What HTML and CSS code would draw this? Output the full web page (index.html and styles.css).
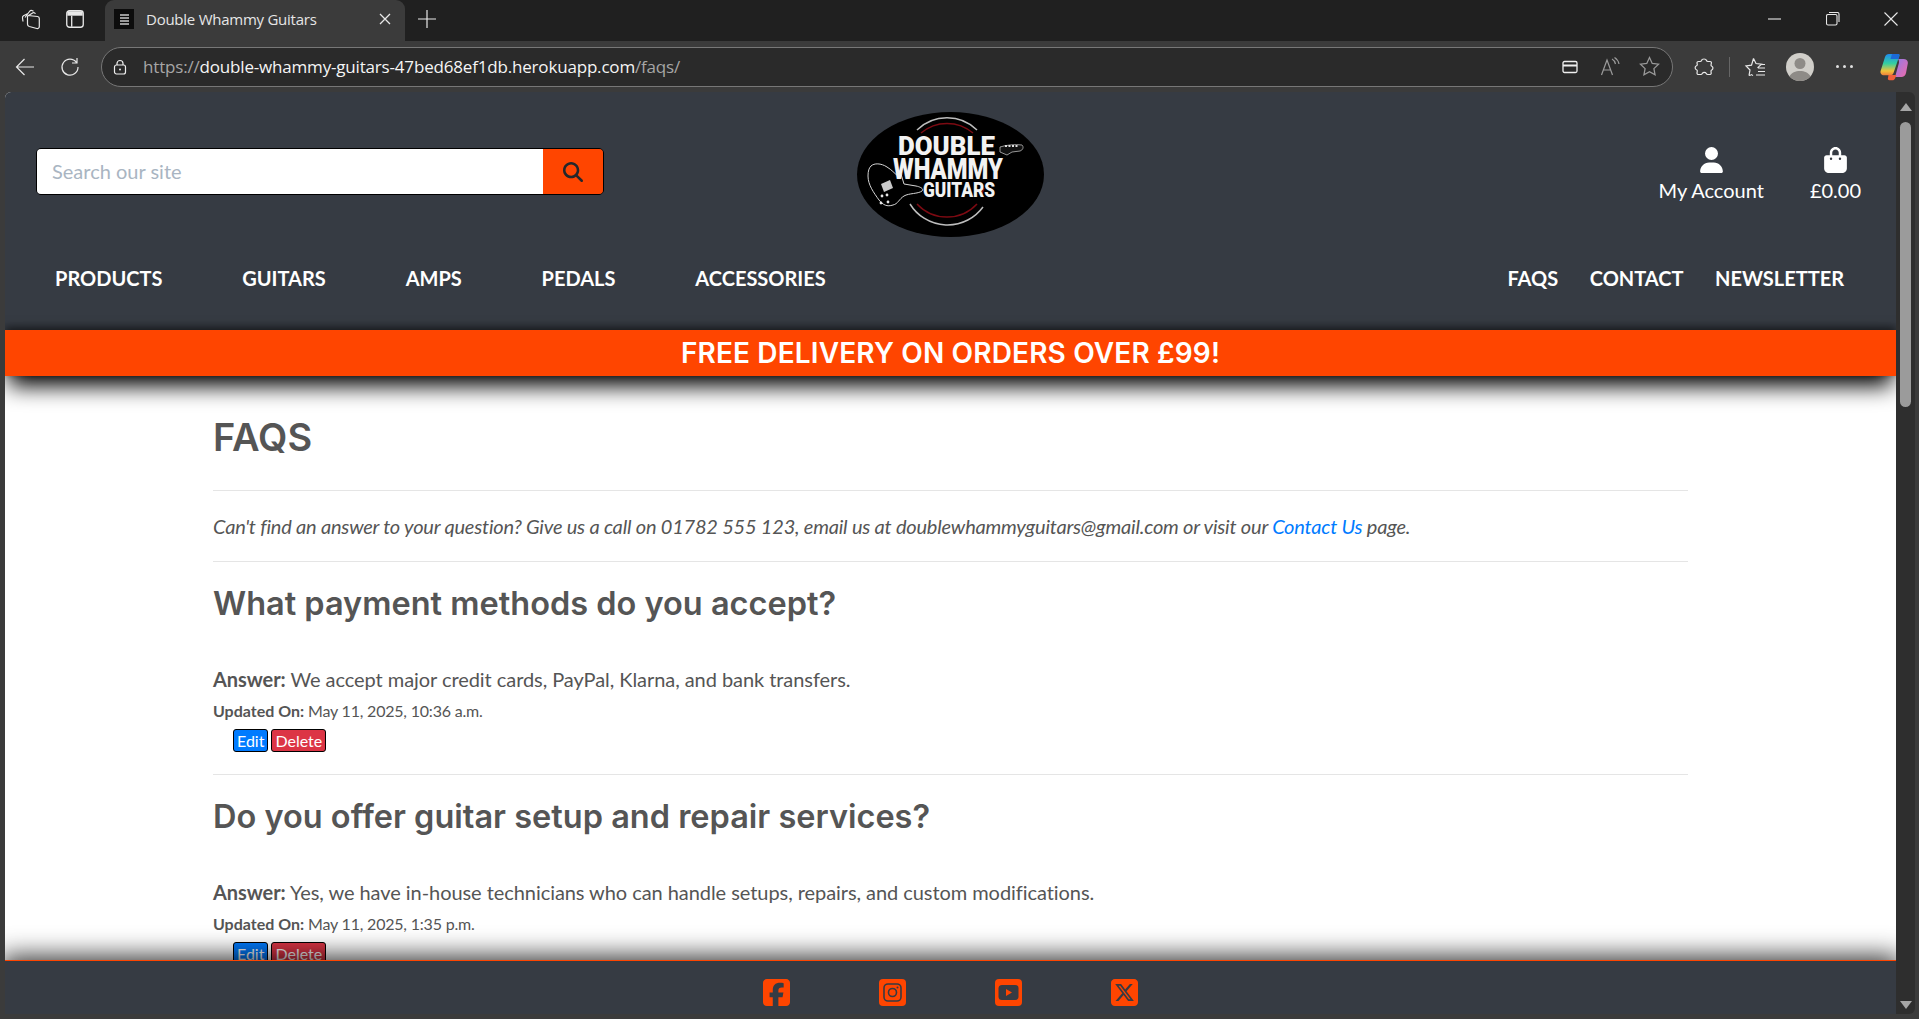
FILE: index.html
```html
<!DOCTYPE html>
<html lang="en">
<head>
<meta charset="utf-8">
<title>Double Whammy Guitars</title>
<link rel="stylesheet" href="styles.css">
</head>
<body>
<div class="window">
  <div class="tabstrip">
    <svg class="ti ti-work" viewBox="0 0 21 21"><path d="M8.500 6.500 13 3.800c1-.5 2 .2 2.500 1M5 8.500l4.500-6c.7-.9 2-1.200 3-.7l1 .5M3 12.500 2.500 9c-.2-1 .2-1.800 1-2.300L8 4.500"/><path d="M8 6.500l9.500 1c1 .1 1.800 1 1.800 2v8c0 1.300-1.200 2.300-2.500 2l-7.500-2c-1-.3-1.800-1.200-1.800-2.300V7.800c0-.8.300-1.300.5-1.300Z"/></svg>
    <svg class="ti ti-side" viewBox="0 0 20 20"><rect x="2.500" y="2.500" width="15" height="15" rx="2.500"/><path class="fillw" d="M3 3h14v4H3z"/><path d="M7 7v10"/></svg>
    <div class="tab">
      <span class="favicon"><i></i><i></i><i></i><i></i></span>
      <span class="tab-title">Double Whammy Guitars</span>
      <svg class="tab-x" viewBox="0 0 12 12"><path d="M1 1l10 10M11 1 1 11"/></svg>
    </div>
    <svg class="ti ti-plus" viewBox="0 0 18 18"><path d="M9 0v18M0 9h18"/></svg>
    <div class="winctl">
      <svg class="wc" viewBox="0 0 14 14"><path d="M0 7h13"/></svg>
      <svg class="wc" viewBox="0 0 14 14"><rect x=".5" y="2.500" width="10.500" height="10.500" rx="1.500"/><path d="M3 .5h8.500c1 0 1.500.6 1.500 1.500v8"/></svg>
      <svg class="wc" viewBox="0 0 14 14"><path d="M.5.5l13 13M13.500.5l-13 13"/></svg>
    </div>
  </div>
  <div class="toolbar">
    <svg class="ti ti-back" viewBox="0 0 20 20"><path d="M19 10H1.500M9.500 2 1.500 10l8 8"/></svg>
    <svg class="ti ti-reload" viewBox="0 0 20 20"><path d="M16.500 5.500A8 8 0 1 0 18 10M17 1v5h-5"/></svg>
    <div class="address">
      <svg class="lock" viewBox="0 0 16 16"><rect x="2.500" y="6" width="11" height="9" rx="2"/><path d="M5 6V4.500a3 3 0 0 1 6 0V6"/><circle cx="8" cy="10.500" r="1" class="fillw"/></svg>
      <span class="url"><span class="dim">https://</span>double-whammy-guitars-47bed68ef1db.herokuapp.com<span class="dim">/faqs/</span></span>
      <svg class="ai ai-card" viewBox="0 0 16 14"><rect x="1" y="1.500" width="14" height="11" rx="1.500"/><path d="M1 5.500h14" class="thick"/></svg>
      <svg class="ai ai-read" viewBox="0 0 20 20"><path d="M1.500 18 7 3l5.500 15M3.500 13h7M12 2c2 1 3 3 3.500 5M14.500 0.500c2.500 1.500 4 4 4.500 6.500"/></svg>
      <svg class="ai ai-star" viewBox="0 0 20 20"><path d="m10 1.500 2.600 5.600 6 .7-4.400 4.200 1.100 6L10 15l-5.300 3 1.100-6L1.400 7.800l6-.7Z"/></svg>
    </div>
    <svg class="ti ti-ext" viewBox="0 0 20 20"><path d="M7.500 3.500C8 1.500 12 1.500 12.500 3.500c.2.800 1 1 1.500 1h2c1 0 1.500.7 1.400 1.500l-.4 2c-.1.600.3 1 .8 1.200 1.500.8 1.500 3 0 3.800-.5.300-.9.700-.8 1.300l.2 1.700c.1 1-.6 1.500-1.500 1.500h-2c-.6 0-1.100-.4-1.400-1-.8-1.500-3.200-1.500-4 0-.3.600-.8 1-1.400 1H4.500c-1 0-1.600-.7-1.500-1.500l.3-2c.1-.6-.3-1-.8-1.200-1.800-.8-1.800-3.300 0-4 .5-.2.900-.7.800-1.200L3 6c-.1-1 .6-1.500 1.500-1.500h1.700c.6 0 1.100-.4 1.300-1Z"/></svg>
    <span class="sep"></span>
    <svg class="ti ti-fav" viewBox="0 0 22 20"><path d="M9.500 1.500 12 6.500l5.500.6-4 3.800M8 18.500l1-.5M5 18.500 6 13 2 9l5.500-.8L9.500 1.500M14 11h7M14 14.500h7M12 18h9M5 18.500c1 0 2-.5 3-1M16 7.500h5"/></svg>
    <svg class="avatar" viewBox="0 0 28 28"><circle cx="14" cy="14" r="14" class="av-bg"/><circle cx="14" cy="10.500" r="5.500" class="av-fg"/><path class="av-fg" d="M3.500 23.500C5.500 19.500 9.500 18 14 18s8.500 1.500 10.500 5.500A14 14 0 0 1 14 28a14 14 0 0 1-10.500-4.500Z"/></svg>
    <span class="dots"><i></i><i></i><i></i></span>
    <svg class="copilot" viewBox="0 0 28 28">
      <defs>
        <linearGradient id="cpa" x1="0" y1="0" x2="0" y2="1"><stop offset="0" stop-color="#1f8cf0"/><stop offset=".45" stop-color="#35cfa0"/><stop offset=".8" stop-color="#f2c33a"/><stop offset="1" stop-color="#f0803a"/></linearGradient>
        <linearGradient id="cpb" x1="0" y1="0" x2="1" y2="1"><stop offset="0" stop-color="#8f7be8"/><stop offset="1" stop-color="#f06aa8"/></linearGradient>
      </defs>
      <path fill="url(#cpa)" d="M9 1h9c1.200 0 1.800.7 1.400 1.800L13.500 20c-.6 1.500-1.500 2.200-3 2.200H4c-2.500 0-4-2-3.400-4.300L5 4c.6-2 2-3 4-3Z"/>
      <path fill="url(#cpb)" d="M18 6h5.500c3 0 4.800 2 4.300 4.500L26 20c-.5 2.600-2.500 4-4.500 4H15l3.800-13.500c.4-1.400.2-3.500-.8-4.500Z"/>
      <path fill="#f0603a" d="M8.500 22h8l-1.500 3.500c-.5 1.200-1.300 1.800-2.700 1.800H9.500c-1.300 0-2-1-1.500-2.200Z"/>
      <path fill="#1c6ad8" d="M12 1h6c1.200 0 1.800.7 1.400 1.800L18.500 6H10.500Z"/>
    </svg>
  </div>

  <div class="viewport">
    <div class="page">
      <header class="site-header">
        <div class="header-top">
          <form class="search">
            <span class="search-input">Search our site</span>
            <span class="search-btn">
              <svg viewBox="0 0 512 512"><path d="M416 208c0 45.900-14.900 88.300-40 122.700L502.600 457.400c12.500 12.500 12.500 32.800 0 45.300s-32.800 12.500-45.300 0L330.700 376c-34.400 25.200-76.800 40-122.700 40C93.100 416 0 322.900 0 208S93.100 0 208 0S416 93.100 416 208zM208 352a144 144 0 1 0 0-288 144 144 0 1 0 0 288z"/></svg>
            </span>
          </form>
          <svg class="logo" viewBox="0 0 187 125" role="img" aria-label="Double Whammy Guitars">
            <ellipse cx="93.500" cy="62.500" rx="93.500" ry="62.500" class="logo-bg"/>
            <path class="logo-arc-g" d="M60 18A43 43 0 0 1 120 18M53 92A44 44 0 0 0 126 95"/>
            <path class="logo-arc-r" d="M64 21A40 40 0 0 1 116 21M60 92A41 41 0 0 0 120 92M124 84 127 76"/>
            <path class="logo-guitar" d="M14 54c3-3 10-3 16 1 5 3 7 6 11 9l3-2 3 10 12 2c5 1 8 3 6 5-4 3-13 2-18 5-5 3-6 8-11 9-6 2-10 0-14-5-5-7-11-15-11-24 0-5 1-8 3-10Z"/>
            <path class="logo-pick" d="M24 72l9-4 3 8-9 4Z"/>
            <circle class="logo-dot" cx="25" cy="84" r="1.400"/><circle class="logo-dot" cx="30" cy="83" r="1.400"/><circle class="logo-dot" cx="24" cy="91" r="1.400"/><circle class="logo-dot" cx="31" cy="90" r="1.400"/>
            <path class="logo-head" d="M143 35c6-2 15-3 22-2 2 2 1 5-2 6l-8 1-5 3-7-3Z"/>
            <path class="logo-pegs" d="M148 34h14"/>
            <text class="logo-t logo-t1" x="41" y="43" textLength="97" lengthAdjust="spacingAndGlyphs">DOUBLE</text>
            <text class="logo-t logo-t2" x="36" y="67" textLength="110" lengthAdjust="spacingAndGlyphs">WHAMMY</text>
            <text class="logo-t logo-t3" x="66" y="85" textLength="72" lengthAdjust="spacingAndGlyphs">GUITARS</text>
          </svg>
          <div class="header-links">
            <a class="hl hl-account">
              <svg viewBox="0 0 448 512"><path d="M224 256A128 128 0 1 0 224 0a128 128 0 1 0 0 256zm-45.700 48C79.800 304 0 383.800 0 482.300C0 498.700 13.300 512 29.700 512H418.300c16.400 0 29.700-13.300 29.700-29.700C448 383.800 368.200 304 269.700 304H178.300z"/></svg>
              <span>My Account</span>
            </a>
            <a class="hl hl-cart">
              <svg viewBox="0 0 448 512"><path d="M160 112c0-35.300 28.700-64 64-64s64 28.700 64 64v48H160V112zm-48 48H48c-26.500 0-48 21.500-48 48V416c0 53 43 96 96 96H352c53 0 96-43 96-96V208c0-26.500-21.500-48-48-48H336V112C336 50.100 285.900 0 224 0S112 50.100 112 112v48zm24 48a24 24 0 1 1 0 48 24 24 0 1 1 0-48zm152 24a24 24 0 1 1 48 0 24 24 0 1 1 -48 0z"/></svg>
              <span>£0.00</span>
            </a>
          </div>
        </div>
        <nav class="main-nav">
          <div class="nav-left">
            <a>PRODUCTS</a><a>GUITARS</a><a>AMPS</a><a>PEDALS</a><a>ACCESSORIES</a>
          </div>
          <div class="nav-right">
            <a>FAQS</a><a>CONTACT</a><a>NEWSLETTER</a>
          </div>
        </nav>
      </header>
      <div class="banner">FREE DELIVERY ON ORDERS OVER £99!</div>
      <main class="content">
        <div class="container">
          <h1 class="page-title">FAQS</h1>
          <p class="intro">Can't find an answer to your question? Give us a call on 01782 555 123, email us at doublewhammyguitars@gmail.com or visit our <a class="link">Contact Us</a> page.</p>
          <section class="faq">
            <h2 class="question">What payment methods do you accept?</h2>
            <p class="answer"><strong>Answer:</strong> We accept major credit cards, PayPal, Klarna, and bank transfers.</p>
            <p class="updated"><strong>Updated On:</strong> May 11, 2025, 10:36 a.m.</p>
            <div class="actions"><a class="btn btn-edit">Edit</a><a class="btn btn-delete">Delete</a></div>
          </section>
          <section class="faq">
            <h2 class="question">Do you offer guitar setup and repair services?</h2>
            <p class="answer"><strong>Answer:</strong> Yes, we have in-house technicians who can handle setups, repairs, and custom modifications.</p>
            <p class="updated"><strong>Updated On:</strong> May 11, 2025, 1:35 p.m.</p>
            <div class="actions"><a class="btn btn-edit">Edit</a><a class="btn btn-delete">Delete</a></div>
          </section>
        </div>
      </main>
      <footer class="site-footer">
        <svg class="social" viewBox="0 32 448 448"><path d="M64 32C28.700 32 0 60.700 0 96V416c0 35.300 28.700 64 64 64h98.200V334.200H109.400V256h52.800V222.300c0-87.100 39.400-127.500 125-127.500c16.200 0 44.200 3.200 55.700 6.400V172c-6-.6-16.500-1-29.600-1c-42 0-58.200 15.900-58.200 57.200V256h83.600l-14.400 78.200H255V480H384c35.300 0 64-28.700 64-64V96c0-35.300-28.700-64-64-64H64z"/></svg>
        <svg class="social" viewBox="0 0 27 27"><rect width="27" height="27" rx="4"/><rect class="cut-line" x="5" y="5" width="17" height="17" rx="4"/><circle class="cut-line" cx="13.500" cy="13.500" r="4"/><circle class="cut-fill" cx="18.500" cy="8.500" r="1"/></svg>
        <svg class="social" viewBox="0 0 27 27"><rect width="27" height="27" rx="4"/><rect class="cut-fill" x="3.500" y="6" width="20" height="15" rx="3.500"/><path d="M11 10l6 3.500-6 3.500Z"/></svg>
        <svg class="social" viewBox="0 32 448 448"><path d="M64 32C28.700 32 0 60.700 0 96V416c0 35.300 28.700 64 64 64H384c35.300 0 64-28.700 64-64V96c0-35.300-28.700-64-64-64H64zm297.100 84L257.300 234.600 379.400 396H283.800L209 298.100 123.300 396H75.800l111-126.900L69.700 116h98l67.700 89.500L313.600 116h47.500zM323.300 367.600L153.400 142.900H125.100L296.900 367.600h26.300z"/></svg>
      </footer>
    </div>
    <div class="scrollbar">
      <span class="sb-up"></span>
      <span class="sb-thumb"></span>
      <span class="sb-down"></span>
    </div>
  </div>
</div>
</body>
</html>
```

FILE: styles.css
```css
* { box-sizing: border-box; }
html, body { margin: 0; height: 100%; overflow: hidden; background: #3b3b3b; }
body { font-family: "Lato", "Liberation Sans", sans-serif; }
p, h1, h2 { margin: 0; }

.window { height: 1019px; display: flex; flex-direction: column; }

/* browser chrome */
.tabstrip { height: 41px; background: #202020; display: flex; align-items: center; flex: none; padding-bottom: 3px; }
.ti { fill: none; stroke: #e8e8e8; stroke-width: 1.200; flex: none; }
.ti-work { width: 21px; height: 21px; margin-left: 20px; }
.ti-side { width: 22px; height: 22px; margin-left: 23px; }
.fillw { fill: #e8e8e8; stroke: none; }
.tab { width: 300px; height: 41px; margin: 0 0 -3px 19px; background: #3b3b3b; border-radius: 9px 9px 0 0; display: flex; align-items: center; padding: 0 14px 3px 9px; flex: none; }
.favicon { width: 20px; height: 20px; background: #0c0c0c; display: flex; flex-direction: column; align-items: center; justify-content: center; gap: 1px; flex: none; }
.favicon i { width: 9px; height: 2px; background: #9a9a9a; }
.tab-title { font: 400 15px/20px "Open Sans", sans-serif; color: #e6e6e6; margin-left: 12px; flex: 1; white-space: nowrap; letter-spacing: -.25px; }
.tab-x { width: 12px; height: 12px; fill: none; stroke: #e8e8e8; stroke-width: 1.300; }
.ti-plus { width: 18px; height: 18px; margin-left: 13px; }
.winctl { margin-left: auto; display: flex; gap: 44px; margin-right: 21px; align-items: center; }
.wc { width: 14px; height: 14px; fill: none; stroke: #e8e8e8; stroke-width: 1.100; }

.toolbar { height: 51px; background: #3b3b3b; display: flex; align-items: center; flex: none; }
.ti-back { width: 20px; height: 20px; margin-left: 15px; }
.ti-reload { width: 20px; height: 20px; margin-left: 25px; }
.address { width: 1572px; height: 40px; margin-left: 21px; border: 1px solid #777; border-radius: 20px; background: #2a2a2a; display: flex; align-items: center; flex: none; padding-left: 10px; }
.lock { width: 16px; height: 16px; fill: none; stroke: #eee; stroke-width: 1.200; flex: none; }
.url { font: 400 17px/22px "Open Sans", sans-serif; color: #f5f5f5; margin-left: 15px; letter-spacing: -.18px; white-space: nowrap; }
.dim { color: #a6a6a6; }
.ai { flex: none; fill: none; stroke: #9a9a9a; stroke-width: 1.200; }
.ai-card { width: 16px; height: 14px; margin-left: auto; stroke: #f0f0f0; stroke-width: 1.300; }
.ai-card .thick { stroke-width: 2; }
.ai-read { width: 20px; height: 20px; margin-left: 22px; }
.ai-star { width: 21px; height: 21px; margin-left: 19px; margin-right: 12px; }
.ti-ext { width: 20px; height: 20px; margin-left: 21px; }
.sep { width: 1px; height: 20px; background: #666; margin-left: 15px; flex: none; }
.ti-fav { width: 22px; height: 20px; margin-left: 14px; }
.avatar { width: 28px; height: 28px; margin-left: 20px; flex: none; }
.av-bg { fill: #d0cec9; }
.av-fg { fill: #8e8b87; }
.dots { display: flex; gap: 4px; margin-left: 22px; flex: none; }
.dots i { width: 3px; height: 3px; border-radius: 50%; background: #e0e0e0; }
.copilot { width: 28px; height: 28px; margin-left: 27px; flex: none; }

/* viewport */
.viewport { flex: 1; display: flex; min-height: 0; padding: 0 4px 5px 5px; }
.page { flex: 1; min-width: 0; display: flex; flex-direction: column; background: #fff; border-top-left-radius: 6px; overflow: hidden; }
.scrollbar { width: 19px; background: #2e2e2e; display: flex; flex-direction: column; align-items: center; flex: none; border-top-right-radius: 6px; border-bottom-right-radius: 6px; }
.sb-up { width: 0; height: 0; border-left: 6px solid transparent; border-right: 6px solid transparent; border-bottom: 8px solid #a6a6a6; margin-top: 11px; }
.sb-thumb { width: 11px; height: 285px; background: #9b9b9b; border-radius: 6px; margin-top: 11px; }
.sb-down { width: 0; height: 0; border-left: 6px solid transparent; border-right: 6px solid transparent; border-top: 8px solid #a6a6a6; margin-top: auto; margin-bottom: 5px; }

/* site header */
.site-header { height: 238px; background: #363b43; color: #fff; flex: none; padding-top: 20px; display: flex; flex-direction: column; }
.header-top { display: grid; grid-template-columns: 1fr auto 1fr; align-items: center; height: 125px; }
.search { width: 568px; height: 47px; margin: 0 0 6px 31px; display: flex; border: 1px solid #000; border-radius: 5px; overflow: hidden; }
.search-input { flex: 1; background: #fff; color: #a9b5c2; font-size: 20px; line-height: 45px; padding-left: 15px; }
.search-btn { width: 60px; background: #ff4500; display: flex; align-items: center; justify-content: center; }
.search-btn svg { width: 20px; height: 20px; fill: #23272b; }
.logo { width: 187px; height: 125px; }
.logo-bg { fill: #000; }
.logo-arc-g { fill: none; stroke: #bdbdbd; stroke-width: 1.500; }
.logo-arc-r { fill: none; stroke: #7c0a12; stroke-width: 1.500; }
.logo-guitar { fill: #000; stroke: #d5d5d5; stroke-width: 1; }
.logo-pick { fill: #c9c9c9; }
.logo-dot { fill: #e6e6e6; }
.logo-head { fill: #111; stroke: #bbb; stroke-width: .8; }
.logo-pegs { stroke: #ddd; stroke-width: 2; stroke-dasharray: 2 1.500; }
.logo-t { font-family: "Roboto", "Liberation Sans", sans-serif; font-weight: 900; fill: #f2f2f2; }
.logo-t1 { font-size: 25px; }
.logo-t2 { font-size: 30px; }
.logo-t3 { font-size: 20px; }

.header-links { display: flex; justify-content: flex-end; margin-right: 35px; gap: 46px; align-items: flex-start; }
.hl { display: flex; flex-direction: column; align-items: center; font-size: 20px; line-height: 24px; color: #fff; gap: 5px; }
.hl svg { width: 23px; height: 26px; fill: #fff; }

.main-nav { height: 93px; display: flex; justify-content: space-between; padding: 29px 52px 0 50px; align-items: flex-start; }
.main-nav a { font-size: 20px; line-height: 24px; font-weight: 700; color: #fff; white-space: nowrap; }
.nav-left { display: flex; gap: 79.800px; }
.nav-right { display: flex; gap: 31.500px; }

/* banner */
.banner { height: 46px; background: #ff4500; color: #fff; flex: none; text-align: center; font: 600 28px/46px "Inter", "Liberation Sans", sans-serif; letter-spacing: .15px; position: relative; z-index: 2; box-shadow: 0 -3px 8px rgba(0, 0, 0, .55), 0 14px 22px -4px #000; }

/* content */
.content { flex: 1; min-height: 0; overflow: hidden; background: #fff; color: #555; }
.container { width: 1475px; margin: 0 auto; }
.page-title { font: 600 38px/48px "Inter", "Liberation Sans", sans-serif; margin-top: 37px; margin-bottom: 29px; }
.intro { border-top: 1px solid #e5e5e5; padding: 23px 0 23px; font-size: 20px; line-height: 24px; font-style: italic; letter-spacing: -.205px; }
.link { color: #007bff; }
.faq { border-top: 1px solid #e5e5e5; padding-top: 23px; height: 213px; }
.question { font: 600 32.500px/38px "Inter", "Liberation Sans", sans-serif; margin-bottom: 44px; }
.answer { font-size: 20px; line-height: 24px; margin-bottom: 10px; letter-spacing: -.06px; }
.updated { font-size: 16px; line-height: 20px; margin-bottom: 8px; letter-spacing: -.2px; }
.updated strong { letter-spacing: 0; }
.actions { display: flex; gap: 3px; padding-left: 20px; }
.btn { height: 23px; border: 1px solid #000; border-radius: 3px; color: #fff; font-size: 16px; line-height: 21px; padding: 0 3px; display: block; }
.btn-edit { background: #007bff; }
.btn-delete { background: #dc3545; }

/* footer */
.site-footer { height: 54px; background: #363b43; border-top: 1px solid #ff4500; flex: none; display: flex; justify-content: center; align-items: center; gap: 89px; position: relative; z-index: 2; box-shadow: 0 0 26px 4px rgba(0, 0, 0, .8); padding-top: 9px; }
.social { width: 27px; height: 27px; fill: #ff4500; flex: none; }
.cut-line { fill: none; stroke: #363b43; stroke-width: 1.600; }
.cut-fill { fill: #363b43; }
```
